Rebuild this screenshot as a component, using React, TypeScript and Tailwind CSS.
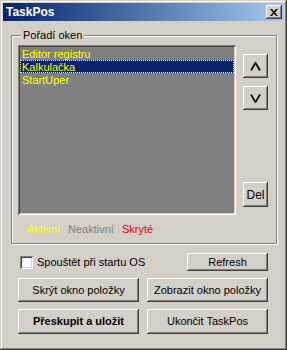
import React from 'react';

const raised =
  'bg-[#d4d0c8] shadow-[inset_-1px_-1px_0_#404040,inset_1px_1px_0_#fff,inset_-2px_-2px_0_#808080,inset_2px_2px_0_#d4d0c8]';
const sunken =
  'shadow-[inset_1px_1px_0_#808080,inset_-1px_-1px_0_#fff,inset_2px_2px_0_#404040,inset_-2px_-2px_0_#d4d0c8]';

function Btn({ children, className = '' }: { children: React.ReactNode; className?: string }) {
  return (
    <button className={`${raised} flex items-center justify-center text-black leading-none ${className}`}>
      {children}
    </button>
  );
}

const items = ['Editor registru', 'Kalkulačka', 'StartUper'];

export default function App() {
  return (
    <div className="w-[287px] h-[350px] bg-[#d4d0c8] p-[3px] flex flex-col text-[11px] text-black font-['Liberation_Sans',Arial,sans-serif] shadow-[inset_-1px_-1px_0_#404040,inset_1px_1px_0_#d4d0c8,inset_-2px_-2px_0_#808080,inset_2px_2px_0_#fff]">
      {/* title bar */}
      <div className="h-[18px] flex items-center justify-between pl-[3px] pr-[2px] bg-linear-to-r from-[#0a246a] to-[#a6caf0]">
        <span className="text-white font-bold text-[12px] leading-none">TaskPos</span>
        <button className={`${raised} w-[16px] h-[14px] flex items-center justify-center`}>
          <svg width="8" height="7" viewBox="0 0 8 7">
            <path d="M0 0h2l2 2.5L6 0h2L5 3.5 8 7H6L4 4.5 2 7H0l3-3.5z" fill="#000" />
          </svg>
        </button>
      </div>

      <div className="flex flex-col pl-[8px] pt-[14px]">
        {/* group box */}
        <div className="relative w-[266px] h-[209px] border border-[#808080] shadow-[1px_1px_0_#fff,inset_1px_1px_0_#fff] pl-[6px] pt-[9px]">
          <span className="absolute left-[9px] top-[-7px] px-[2px] bg-[#d4d0c8] leading-[13px]">Pořadí oken</span>
          <div className="flex gap-[7px]">
            <div className={`${sunken} w-[218px] h-[170px] bg-[#808080] p-[2px]`}>
              {items.map((it, i) => (
                <div
                  key={it}
                  className={`h-[13px] leading-[12px] pl-[1px] text-[#ffff00] ${
                    i === 1 ? 'bg-[#0a246a] border border-dotted border-[#ffff80]' : 'border border-transparent'
                  }`}
                >
                  {it}
                </div>
              ))}
            </div>
            <div className="w-[25px] h-[170px] flex flex-col pt-[9px] pb-[8px]">
              <Btn className="h-[24px]">
                <svg width="11" height="9" viewBox="0 0 11 9">
                  <path d="M1 8.5 5.5 0.8 10 8.5" fill="none" stroke="#000" strokeWidth="1.7" />
                </svg>
              </Btn>
              <Btn className="h-[24px] mt-[8px]">
                <svg width="11" height="9" viewBox="0 0 11 9">
                  <path d="M1 0.5 5.5 8.2 10 0.5" fill="none" stroke="#000" strokeWidth="1.7" />
                </svg>
              </Btn>
              <Btn className="h-[25px] mt-auto text-[12px]">Del</Btn>
            </div>
          </div>
          <div className="flex gap-[8px] pl-[9px] mt-[8px] leading-[13px]">
            <span className="text-[#ffff00]">Aktivní</span>
            <span className="text-[#808080]">Neaktivní</span>
            <span className="text-[#e00000]">Skryté</span>
          </div>
        </div>

        {/* bottom controls */}
        <div className="ml-[7px] w-[250px] flex flex-col mt-[9px] gap-[7px]">
          <div className="flex items-center justify-between h-[18px]">
            <label className="flex items-center gap-[4px] ml-[2px]">
              <span className={`${sunken} w-[13px] h-[13px] bg-white`} />
              <span>Spouštět při startu OS</span>
            </label>
            <Btn className="w-[81px] h-[18px]">Refresh</Btn>
          </div>
          <div className="flex gap-[8px]">
            <Btn className="w-[121px] h-[24px]">Skrýt okno položky</Btn>
            <Btn className="w-[121px] h-[24px]">Zobrazit okno položky</Btn>
          </div>
          <div className="flex gap-[8px]">
            <Btn className="w-[121px] h-[25px] font-bold">Přeskupit a uložit</Btn>
            <Btn className="w-[121px] h-[25px]">Ukončit TaskPos</Btn>
          </div>
        </div>
      </div>
    </div>
  );
}
